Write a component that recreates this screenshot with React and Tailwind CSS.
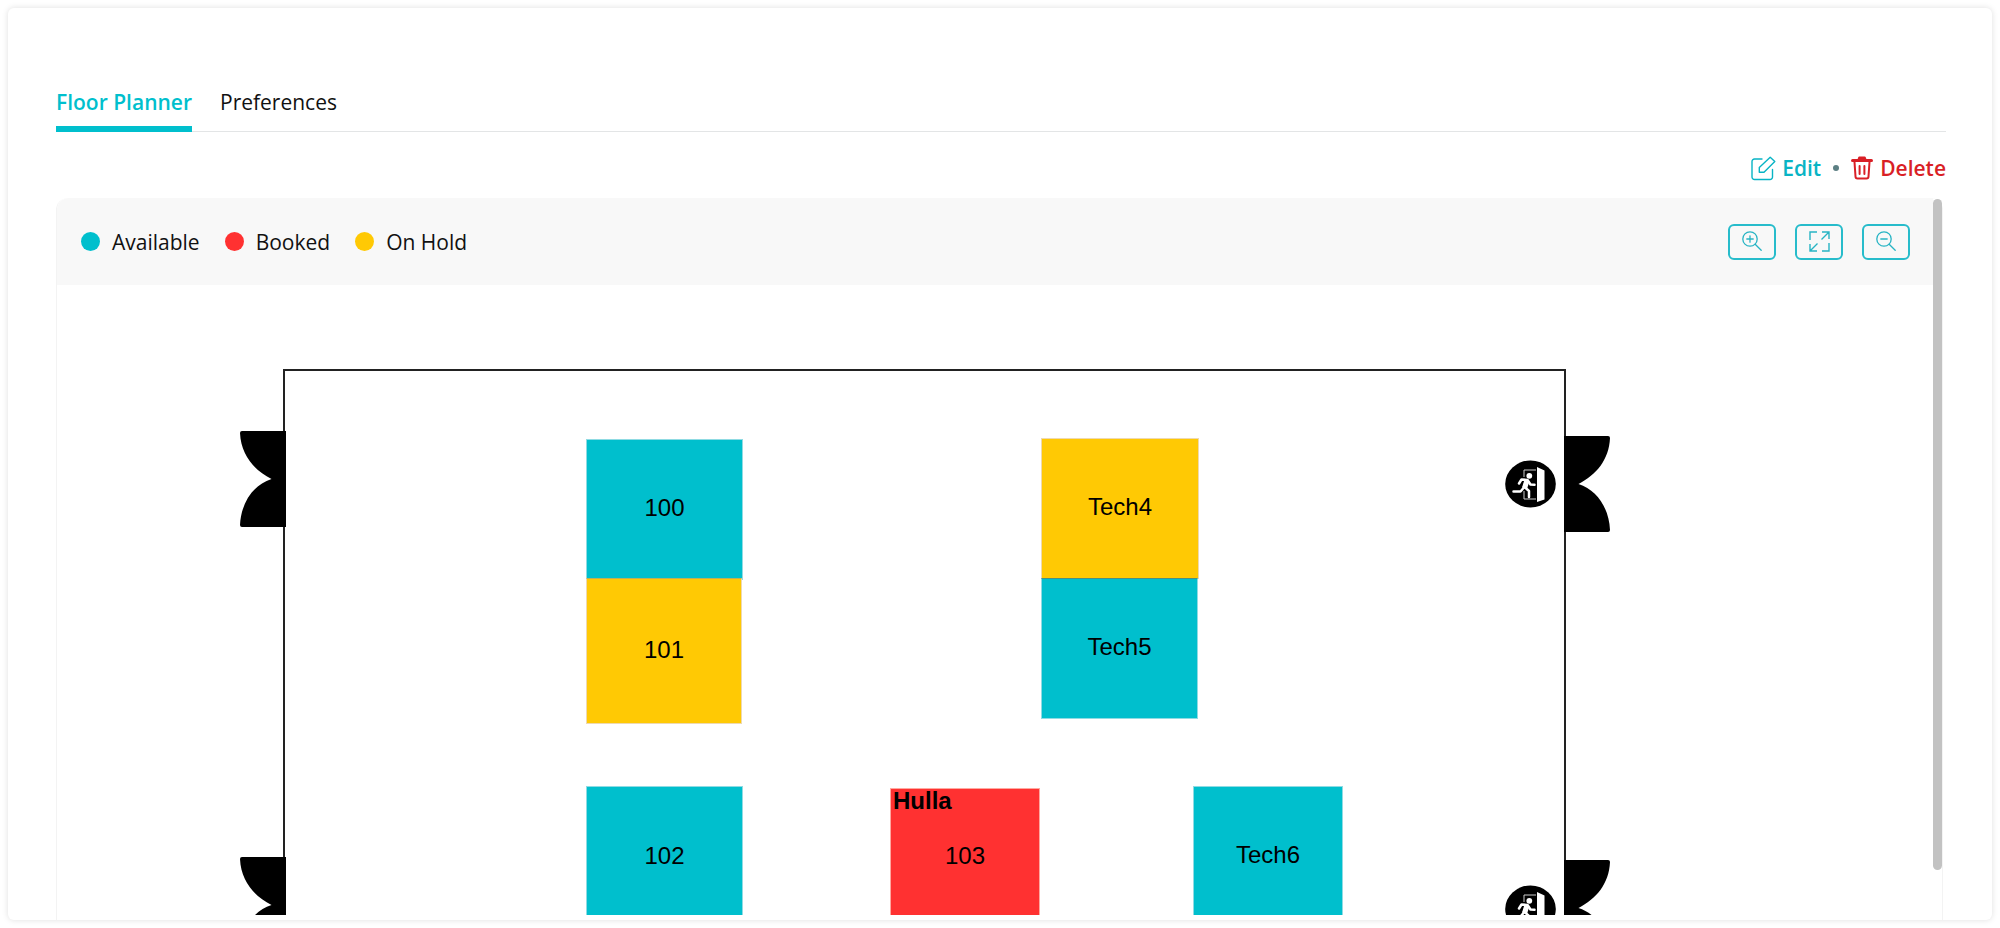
import clsx from 'clsx';

const legend = [
    { label: 'Available', dot: 'bg-[#00bfcd]' },
    { label: 'Booked', dot: 'bg-[#ff3131]' },
    { label: 'On Hold', dot: 'bg-[#ffc904]' },
];

const statusColors = {
    available: 'bg-[#00bfcd] border-[#8fdbe3]',
    booked: 'bg-[#ff3131] border-[#ffa8a0]',
    hold: 'bg-[#ffc904] border-[#eed9b0]',
};

const booths = [
    { name: '100', status: 'available', place: 'left-[529px] top-[154px] w-[157px] h-[141px]' },
    { name: '101', status: 'hold', place: 'left-[529px] top-[293px] w-[156px] h-[146px] border-t-[#b9b05a]' },
    { name: 'Tech4', status: 'hold', place: 'left-[984px] top-[153px] w-[158px] h-[141px]' },
    { name: 'Tech5', status: 'available', place: 'left-[984px] top-[293px] w-[157px] h-[141px] border-t-[#4b8f80]' },
    { name: '102', status: 'available', place: 'left-[529px] top-[501px] w-[157px] h-[142px]' },
    { name: '103', status: 'booked', owner: 'Hulla', place: 'left-[833px] top-[503px] w-[150px] h-[138px]' },
    { name: 'Tech6', status: 'available', place: 'left-[1136px] top-[501px] w-[150px] h-[140px]' },
];

function EditIcon() {
    return (
        <svg width="25" height="25" viewBox="0 0 25 25" fill="none" stroke="currentColor" strokeWidth="1.4" strokeLinejoin="round" strokeLinecap="round">
            <path d="M11 3H3.5A2.5 2.5 0 0 0 1 5.500V21a2.500 2.500 0 0 0 2.500 2.500H19a2.500 2.500 0 0 0 2.500-2.500v-7.500" />
            <path d="M19.200 1.200 23.800 5.600 13 16.300H8.300v-4.700Z" />
        </svg>
    );
}

function TrashIcon() {
    return (
        <svg width="22" height="24" viewBox="0 0 22 24" fill="none" stroke="currentColor" strokeWidth="2" strokeLinejoin="round" strokeLinecap="round">
            <path d="M7.500 3.500 8.200 1.500h5.600l.7 2" fill="currentColor" />
            <path d="M1.500 4.500h19" strokeWidth="3" />
            <path d="M3.500 6l1 14.500a2 2 0 0 0 2 2h9a2 2 0 0 0 2-2L18.500 6" />
            <path d="M8.600 10v8M13.400 10v8" />
        </svg>
    );
}

function ZoomIcon({ plus }) {
    return (
        <svg width="20" height="20" viewBox="0 0 20 20" fill="none" stroke="currentColor" strokeWidth="1.3" strokeLinecap="round">
            <circle cx="8" cy="8" r="7.200" />
            <path d="M13.200 13.200 19.200 19.200M4.800 8h6.400" />
            {plus && <path d="M8 4.800v6.400" />}
        </svg>
    );
}

function FitIcon() {
    return (
        <svg width="21" height="21" viewBox="0 0 21 21" fill="none" stroke="currentColor" strokeWidth="1.4">
            <path d="M8 1H1v8M20 12v8h-7M13 1h7v7M20 1l-7.500 7.500M8 20H1v-7M1 20l7.500-7.500" />
        </svg>
    );
}

function Door({ flip, className }) {
    return (
        <svg width="46" height="97" viewBox="0 0 46 97" className={clsx('absolute', flip && '-scale-x-100', className)}>
            <path d="M2 0H46V96H2Q0 96 0 94C1 72 13 54 31.500 48C14 39 1 24 0 2Q0 0 2 0Z" fill="#000" />
        </svg>
    );
}

function ExitSign({ className }) {
    return (
        <svg width="51" height="48" viewBox="0 0 51 48" className={clsx('absolute', className)}>
            <ellipse cx="25.500" cy="24" rx="25.300" ry="23.500" fill="#000" />
            <path d="M31 10H19v7M19 31v8h12" fill="none" stroke="#ccc" strokeWidth="1" />
            <path d="M32 7l7.500 3.500v29L32 42Z" fill="#fff" />
            <circle cx="24.300" cy="15.800" r="2.900" fill="#fff" />
            <path d="M14 23.500l2.500-4 6 .5 3 4.500 4 .3M21.500 20.500l-3 7.500-3 3.500H8.500M19.500 27l4.500 4v6" fill="none" stroke="#fff" strokeWidth="2.500" strokeLinejoin="round" strokeLinecap="round" />
            <path d="M19.500 19.500l5 1.500-2.500 8-5-1.500Z" fill="#fff" />
        </svg>
    );
}

function Booth({ name, status, owner, place }) {
    return (
        <button type="button" className={clsx('absolute flex items-center justify-center border pb-[3px] text-2xl', statusColors[status], place)}>
            {owner && <strong className="absolute left-[2px] top-0 text-2xl/6">{owner}</strong>}
            {name}
        </button>
    );
}

function ToolButton({ label, children }) {
    return (
        <button type="button" aria-label={label} className="flex h-9 w-12 items-center justify-center rounded-md border-2 border-[#27bccb] pb-px text-[#27b4c4]">
            {children}
        </button>
    );
}

export default function App() {
    return (
        <div className="h-screen bg-white p-2 font-['Open_Sans',sans-serif] text-[21px]/7 text-[#111]">
            <main className="flex h-full flex-col rounded-md pt-20 pr-[46px] pl-12 shadow-[0_0_6px_rgba(0,0,0,0.13)]">
                <nav className="flex gap-7 border-b border-[#e3e5e6]">
                    <a href="#planner" className="-mb-px border-b-[6px] border-[#00bfcd] pb-[10px] font-semibold text-[#00bfcd]">Floor Planner</a>
                    <a href="#preferences">Preferences</a>
                </nav>

                <div className="flex items-center justify-end pt-[22px] pb-4 font-semibold">
                    <button type="button" className="flex items-center gap-[6px] text-[#08b4c5]">
                        <EditIcon />
                        Edit
                    </button>
                    <span className="mx-3 size-[6px] rounded-full bg-[#5c7f83]" />
                    <button type="button" className="flex items-center gap-[7px] text-[#d91f26]">
                        <TrashIcon />
                        Delete
                    </button>
                </div>

                <section className="mr-[3px] flex min-h-0 flex-1 rounded-t-xl border-x border-[#f3f3f3]">
                    <div className="flex min-w-0 flex-1 flex-col">
                        <header className="flex h-[87px] shrink-0 items-center justify-between rounded-tl-xl bg-[#f8f8f8] pr-[23px] pl-6">
                            <ul className="flex gap-[25px]">
                                {legend.map((item) => (
                                    <li key={item.label} className="flex items-center gap-3">
                                        <span className={clsx('size-[19px] rounded-full', item.dot)} />
                                        {item.label}
                                    </li>
                                ))}
                            </ul>
                            <div className="flex gap-[19px]">
                                <ToolButton label="Zoom in"><ZoomIcon plus /></ToolButton>
                                <ToolButton label="Fit to screen"><FitIcon /></ToolButton>
                                <ToolButton label="Zoom out"><ZoomIcon /></ToolButton>
                            </div>
                        </header>

                        <div className="relative mb-[5px] min-h-0 flex-1 overflow-hidden font-['Liberation_Sans',Arial,sans-serif] text-black">
                            <div className="absolute left-[226px] top-[84px] h-[900px] w-[1283px] border-2 border-[#222]" />
                            <Door className="left-[183px] top-[146px]" />
                            <Door className="left-[183px] top-[572px]" />
                            <Door flip className="left-[1507px] top-[151px]" />
                            <Door flip className="left-[1507px] top-[575px]" />
                            <ExitSign className="left-[1448px] top-[175px]" />
                            <ExitSign className="left-[1448px] top-[600px]" />
                            {booths.map((booth) => (
                                <Booth key={booth.name} {...booth} />
                            ))}
                        </div>
                    </div>
                    <div className="w-[9px] pt-px">
                        <div className="h-[93%] rounded-full bg-[#c2c2c2]" />
                    </div>
                </section>
            </main>
        </div>
    );
}
